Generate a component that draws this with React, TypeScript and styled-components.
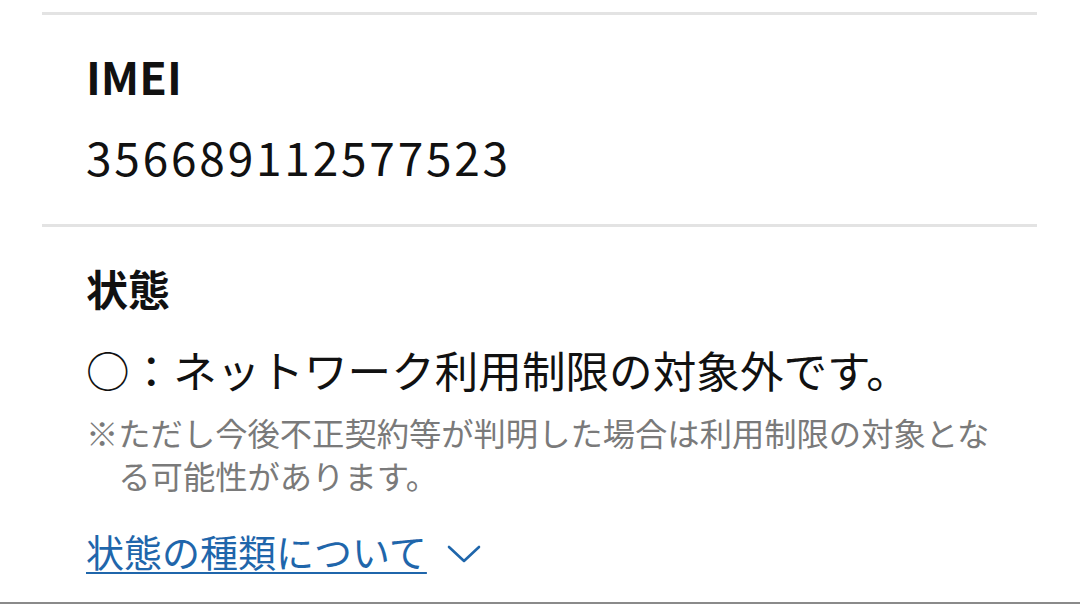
import * as React from 'react';
import styled, { createGlobalStyle } from 'styled-components';

const GlobalStyle = createGlobalStyle`
  html, body {
    margin: 0;
    padding: 0;
    background: #ffffff;
  }
  body {
    font-family: "Noto Sans CJK JP", "Noto Sans", sans-serif;
    color: #111111;
  }
`;

const Page = styled.div`
  box-sizing: border-box;
  height: 604px;
  padding: 12px 43px 0 42px;
  border-bottom: 2px solid #8a8a8a;
  overflow: hidden;
`;

const Section = styled.section<{ $bottomPad: number }>`
  border-top: 3px solid #e3e3e3;
  padding: 35px 44px ${(p) => p.$bottomPad}px 44px;
`;

const Label = styled.h2<{ $size: number }>`
  margin: 0;
  font-size: ${(p) => p.$size}px;
  line-height: 52px;
  font-weight: 700;
  color: #111;
`;

const Value = styled.div`
  margin-top: 26px;
  font-size: 46px;
  line-height: 56px;
  font-weight: 400;
  letter-spacing: 2.8px;
`;

const Status = styled.p`
  margin: 29px 0 0;
  font-size: 43.6px;
  line-height: 52px;
  font-weight: 400;
  white-space: nowrap;
`;

const Note = styled.p`
  margin: 16px -12px 0 0;
  font-size: 32.3px;
  line-height: 43px;
  color: #7a7a7a;
  padding-left: 1em;
  text-indent: -1em;
`;

const Toggle = styled.a`
  display: inline-flex;
  align-items: center;
  margin-top: 30px;
  font-size: 38px;
  line-height: 48px;
  color: #1f66ab;
  cursor: pointer;
`;

const ToggleText = styled.span`
  text-decoration: underline;
  text-decoration-thickness: 2px;
  text-underline-offset: 5px;
`;

const Chevron = styled.svg`
  margin-left: 20px;
  margin-top: 6px;
`;

export default function App() {
  return (
    <>
      <GlobalStyle />
      <Page>
        <Section $bottomPad={40}>
          <Label $size={45}>IMEI</Label>
          <Value>356689112577523</Value>
        </Section>
        <Section $bottomPad={0}>
          <Label $size={42}>状態</Label>
          <Status>○：ネットワーク利用制限の対象外です。</Status>
          <Note>※ただし今後不正契約等が判明した場合は利用制限の対象となる可能性があります。</Note>
          <Toggle>
            <ToggleText>状態の種類について</ToggleText>
            <Chevron width="34" height="20" viewBox="0 0 34 20" fill="none">
              <path d="M2 3 L17 17 L32 3" stroke="#1f66ab" strokeWidth="2.6" strokeLinecap="round" strokeLinejoin="round" />
            </Chevron>
          </Toggle>
        </Section>
      </Page>
    </>
  );
}
